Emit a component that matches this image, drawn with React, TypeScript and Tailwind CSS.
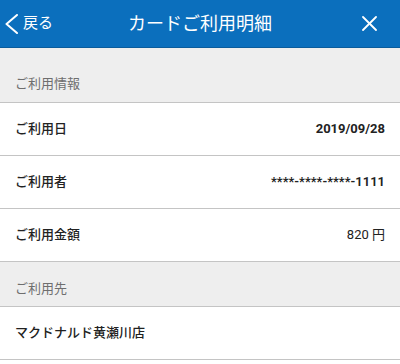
interface Row {
  label: string;
  value?: string;
  valueClass?: string;
}

const usageRows: Row[] = [
  { label: 'ご利用日', value: '2019/09/28', valueClass: 'font-bold' },
  { label: 'ご利用者', value: '****-****-****-1111', valueClass: 'font-semibold' },
  { label: 'ご利用金額', value: '820 円', valueClass: 'font-normal' },
];

function SectionHead({ title, className }: { title: string; className: string }) {
  return (
    <div className={`bg-[#eeeeee] border-b border-[#c4c4c4] px-[15px] flex items-end ${className}`}>
      <span className="text-[13px] text-[#6e6e6e]">{title}</span>
    </div>
  );
}

function DetailRow({ label, value, valueClass }: Row) {
  return (
    <div className="h-[53px] bg-white border-b border-[#c4c4c4] px-[15px] flex items-center justify-between">
      <span className="text-[13px] font-medium text-[#222]">{label}</span>
      {value && <span className={`text-[13px] text-[#222] ${valueClass ?? ''}`}>{value}</span>}
    </div>
  );
}

export default function App() {
  return (
    <div
      className="w-[400px] h-[364px] overflow-hidden bg-white"
      style={{ fontFamily: 'Roboto, "Noto Sans CJK JP", sans-serif' }}
    >
      {/* Header */}
      <header className="h-[48px] bg-[#0b6fbd] border-b border-[#0a5c9c] flex items-center text-white relative">
        <button className="flex items-center pl-[5px]">
          <svg width="13" height="20" viewBox="0 0 13 20" fill="none" stroke="currentColor" strokeWidth="2" strokeLinecap="round" strokeLinejoin="round">
            <polyline points="12,1 1.5,10 12,19" />
          </svg>
          <span className="text-[15px] ml-[5px]">戻る</span>
        </button>
        <h1 className="absolute left-0 right-0 text-center text-[18px] pointer-events-none">カードご利用明細</h1>
        <button className="ml-auto mr-[23px]">
          <svg width="15" height="15" viewBox="0 0 15 15" fill="none" stroke="currentColor" strokeWidth="1.8" strokeLinecap="round">
            <line x1="1" y1="1" x2="14" y2="14" />
            <line x1="14" y1="1" x2="1" y2="14" />
          </svg>
        </button>
      </header>

      <SectionHead title="ご利用情報" className="h-[55px] pb-[9px]" />
      {usageRows.map((r) => (
        <DetailRow key={r.label} {...r} />
      ))}

      <SectionHead title="ご利用先" className="h-[45px] pb-[8px]" />
      <DetailRow label="マクドナルド黄瀬川店" />
    </div>
  );
}
